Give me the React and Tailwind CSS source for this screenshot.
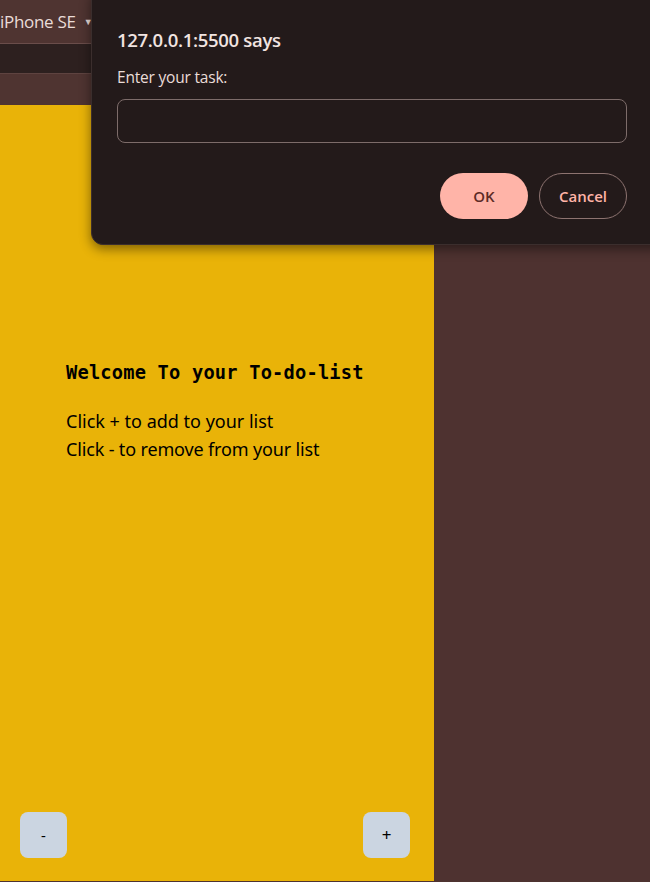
export default function App() {

    return (

        <div className="relative w-[650px] h-[882px] overflow-hidden bg-[#4e3230] font-['Noto_Sans',sans-serif]">

            {/* DEVTOOLS BARS */}
            <div className="h-[44px] bg-[#4f3431] border-b border-[#6a4d4a] flex items-center">

                <span className="text-[17px] text-[#eadcd8] font-['Open_Sans',sans-serif] tracking-[-0.3px]">iPhone SE</span>

                <span className="ml-[8px] text-[9px] text-[#eadcd8]">▼</span>

            </div>

            <div className="h-[30px] bg-[#2d201f] border-b border-[#5e4340]"></div>

            <div className="h-[31px] bg-[#4f3431]"></div>

            {/* PAGE */}
            <div className="flex">

                <div className="w-[434px] h-[776px] bg-[#e9b308] flex flex-col">

                    <div className="pt-[259px] pl-[66px]">

                        <h1 className="font-['DejaVu_Sans_Mono',monospace] font-bold text-[18.7px] text-black leading-none tracking-[0.2px]">

                            Welcome To your To-do-list

                        </h1>

                        <p className="mt-[24px] text-[18px] leading-[28px] text-black">Click + to add to your list</p>

                        <p className="text-[18px] leading-[28px] text-black tracking-[-0.15px]">Click - to remove from your list</p>

                    </div>

                    <div className="mt-auto mb-[23px] px-[20px] flex justify-between">

                        <button className="w-[47px] h-[46px] rounded-lg bg-[#cbd5e1] text-[15px] text-black">-</button>

                        <button className="w-[47px] h-[46px] mr-[4px] rounded-lg bg-[#cbd5e1] text-[17px] text-black">+</button>

                    </div>

                </div>

                <div className="flex-1 bg-[#4e3230]"></div>

            </div>

            {/* PROMPT DIALOG */}
            <div className="absolute left-[91px] -top-[12px] w-[580px] h-[257px] rounded-xl bg-[#231a1a] border border-[#3b2e2d] shadow-[0_4px_12px_rgba(0,0,0,0.45)] pl-[25px] pt-[42px] font-['Open_Sans',sans-serif]">

                <h2 className="text-[18.5px] font-semibold text-[#f1e4e1] leading-none tracking-[-0.3px]">127.0.0.1:5500 says</h2>

                <p className="mt-[20px] text-[15.5px] text-[#eadcd8] leading-none tracking-[-0.2px]">Enter your task:</p>

                <div className="mt-[14px] w-[510px] h-[44px] rounded-lg border border-[#7d6c6a]"></div>

                <div className="mt-[30px] w-[510px] flex justify-end gap-[11px]">

                    <button className="w-[88px] h-[46px] rounded-full bg-[#ffb4a8] text-[15px] font-semibold text-[#5c2b26]">OK</button>

                    <button className="w-[88px] h-[46px] rounded-full border border-[#8d7370] text-[15px] font-semibold text-[#ffb4a8]">Cancel</button>

                </div>

            </div>

        </div>
    )
}
